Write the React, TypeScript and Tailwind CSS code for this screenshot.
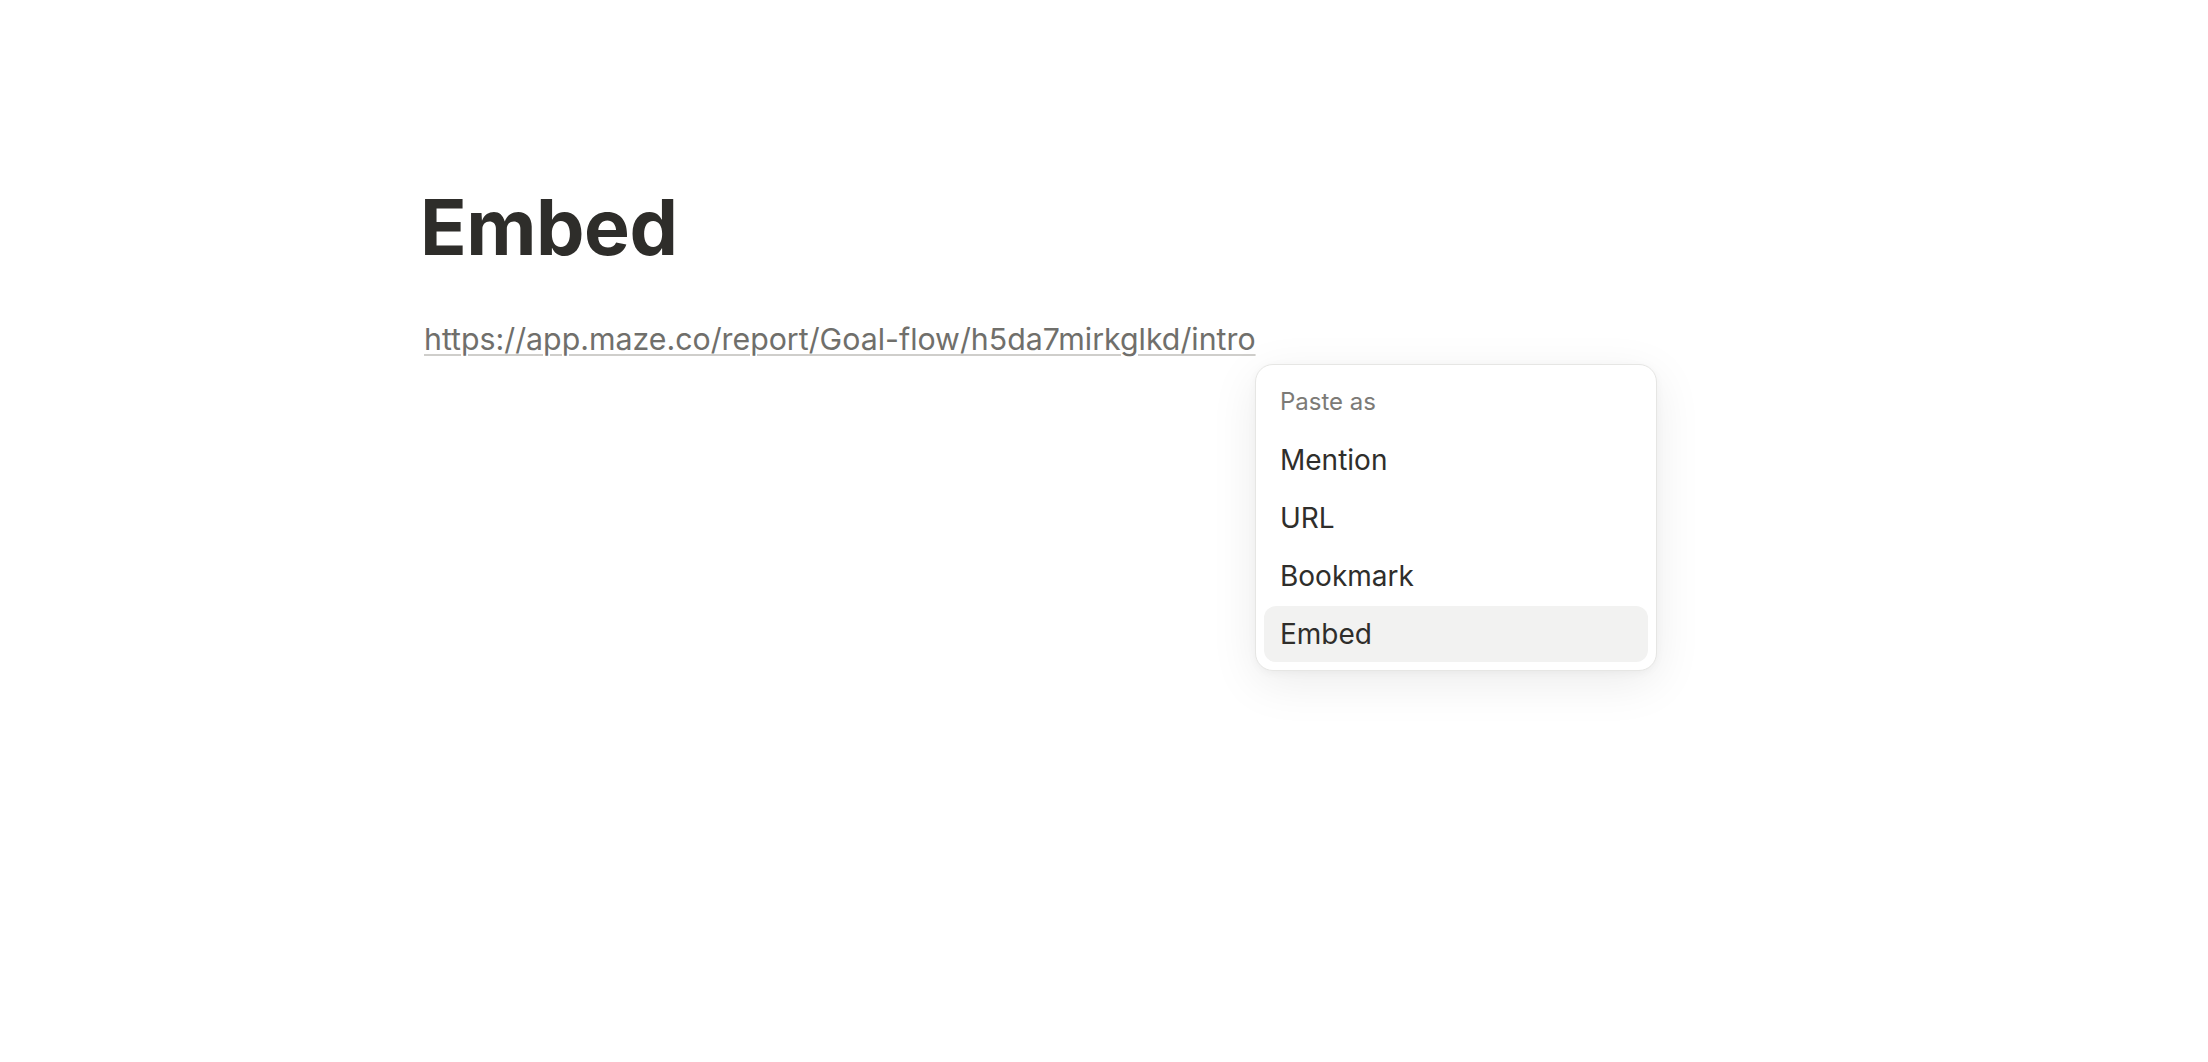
import React from 'react'

const items = ['Mention', 'URL', 'Bookmark', 'Embed']

function PasteMenu({ active }: { active: string }) {
  return (
    <div className="absolute left-[1255px] top-[364px] w-[402px] rounded-[18px] border border-[#e6e6e4] bg-white p-[8px] shadow-[0_12px_48px_rgba(15,15,15,0.08),0_2px_8px_rgba(15,15,15,0.04)]">
      <div className="px-[16px] pt-[11px] pb-[12px] text-[24px] leading-[36px] text-[#7c7a76]">Paste as</div>
      <div className="flex flex-col gap-[2px]">
        {items.map((item) => (
          <div
            key={item}
            className={
              item === active
                ? 'flex h-[56px] items-center rounded-[12px] bg-[#f2f2f1] px-[16px] text-[28px] text-[#2f2e2b]'
                : 'flex h-[56px] items-center rounded-[12px] px-[16px] text-[28px] text-[#2f2e2b]'
            }
          >
            {item}
          </div>
        ))}
      </div>
    </div>
  )
}

export default function App() {
  return (
    <div className="relative min-h-[1062px] w-full bg-white font-['Inter',sans-serif]">
      <div className="pl-[420px] pt-[180px]">
        <h1 className="text-[77px] font-bold leading-[94px] tracking-[-0.5px] text-[#2e2d2a]">Embed</h1>
        <p className="mt-[45px] pl-[4px] text-[30.3px] leading-[40px] text-[#706f6b]">
          <span className="underline decoration-[#cfcecb] decoration-2 underline-offset-[4px]">
            https://app.maze.co/report/Goal-flow/h5da7mirkglkd/intro
          </span>
        </p>
      </div>
      <PasteMenu active="Embed" />
    </div>
  )
}
